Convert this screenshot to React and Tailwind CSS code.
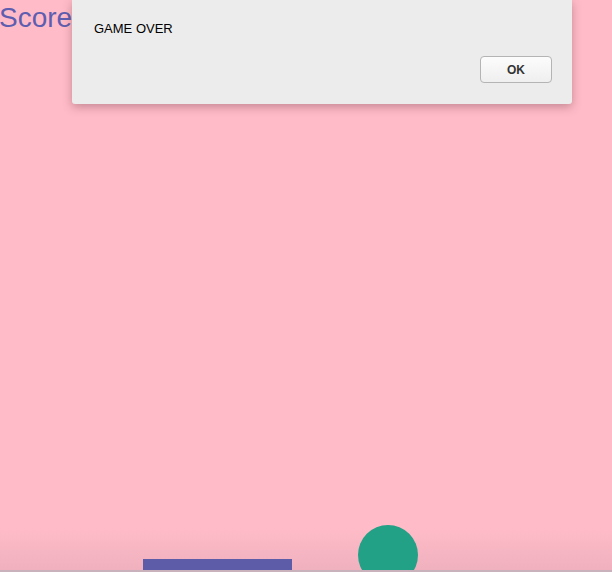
export default function App() {
  return (
    <div className="relative h-[572px] w-[612px] overflow-hidden bg-[#ffbbc8] font-['Liberation_Sans',Arial,sans-serif]">
      <div className="absolute left-[-1px] top-[0px] text-[28px] leading-[36px] text-[#5e5eb0]">Score</div>

      {/* bottom shade */}
      <div className="absolute inset-x-0 bottom-0 h-[44px] bg-gradient-to-b from-transparent to-[#efb0bd]" />
      <div className="absolute left-[143px] top-[559px] h-[13px] w-[149px] bg-[#5c5ca8]" />
      <div className="absolute left-[358px] top-[525px] h-[60px] w-[60px] rounded-full bg-[#22a187]" />
      <div className="absolute inset-x-0 bottom-0 h-[2px] bg-[#c9b2bc]" />

      {/* alert dialog */}
      <div className="absolute left-[72px] top-0 flex h-[104px] w-[500px] flex-col rounded-b-[3px] bg-[#ececec] shadow-[0_3px_10px_rgba(90,40,50,0.35)]">
        <p className="pl-[22px] pt-[21px] text-[13px] leading-[16px] text-black">GAME OVER</p>
        <div className="mt-auto flex justify-end pb-[21px] pr-[20px]">
          <button className="h-[27px] w-[72px] rounded-[4px] border border-[#b4b4b4] bg-gradient-to-b from-[#fcfcfc] to-[#efefef] text-[12px] font-bold text-[#333]">
            OK
          </button>
        </div>
      </div>
    </div>
  );
}
